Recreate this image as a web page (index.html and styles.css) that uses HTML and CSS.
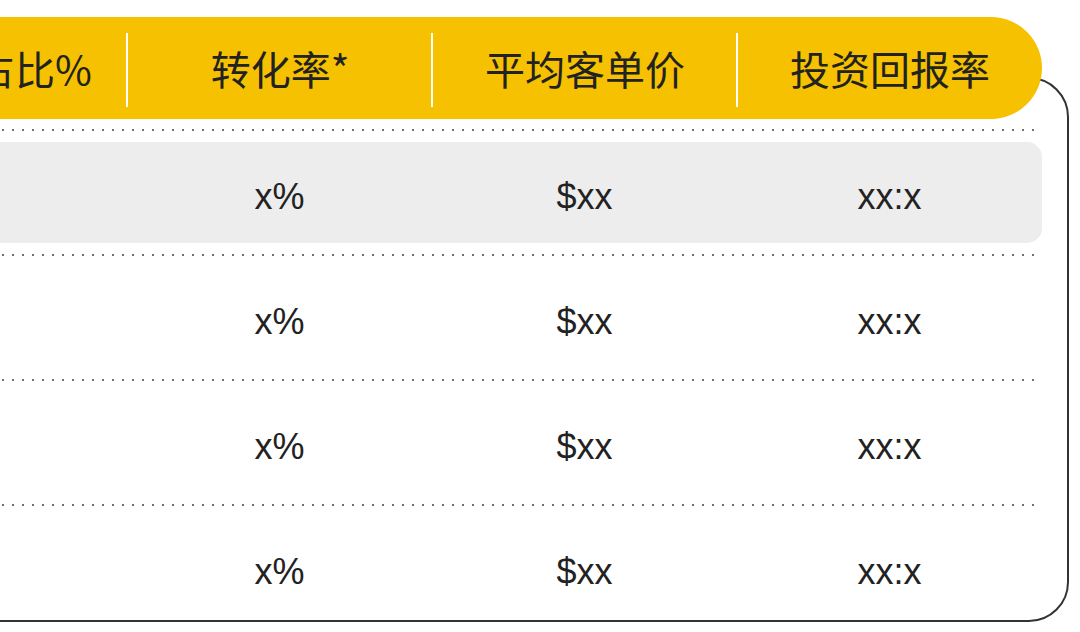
FILE: index.html
```html
<!DOCTYPE html>
<html lang="zh">
<head>
<meta charset="utf-8">
<title>数据表</title>
<link rel="stylesheet" href="styles.css">
</head>
<body>
<div class="card">
  <div class="head">
    <div class="hcell first">销售额占比<span class="pct">%</span></div>
    <div class="hcell divided">转化率*</div>
    <div class="hcell divided">平均客单价</div>
    <div class="hcell divided">投资回报率</div>
  </div>
  <div class="sep"></div>
  <div class="row hl">
    <div class="cell"></div>
    <div class="cell">x%</div>
    <div class="cell">$xx</div>
    <div class="cell">xx:x</div>
  </div>
  <div class="sep"></div>
  <div class="row">
    <div class="cell"></div>
    <div class="cell">x%</div>
    <div class="cell">$xx</div>
    <div class="cell">xx:x</div>
  </div>
  <div class="sep"></div>
  <div class="row">
    <div class="cell"></div>
    <div class="cell">x%</div>
    <div class="cell">$xx</div>
    <div class="cell">xx:x</div>
  </div>
  <div class="sep"></div>
  <div class="row">
    <div class="cell"></div>
    <div class="cell">x%</div>
    <div class="cell">$xx</div>
    <div class="cell">xx:x</div>
  </div>
</div>
</body>
</html>
```
FILE: styles.css
```css
html, body {
  margin: 0;
  padding: 0;
  background: #ffffff;
  overflow: hidden;
}

body {
  width: 1080px;
  height: 632px;
  font-family: "Liberation Sans", "Noto Sans CJK SC", sans-serif;
  color: #222222;
}

.card {
  box-sizing: border-box;
  width: 1269px;
  margin: 77px 0 0 -200px;
  padding: 0 25px 2px 20px;
  border: 2px solid #333333;
  border-radius: 0 40px 40px 0;
}

.head {
  display: grid;
  grid-template-columns: repeat(4, 305px);
  margin-top: -62px;
  padding: 16px 0 12px;
  background: #f5c100;
  border-radius: 0 51px 51px 0;
  font-family: "Noto Sans CJK SC", sans-serif;
  font-size: 40px;
  color: #222222;
}

.hcell {
  height: 74px;
  line-height: 70px;
  text-align: center;
  white-space: nowrap;
}

.hcell.first {
  padding-right: 4px;
}

.pct {
  letter-spacing: -2px;
}

.hcell.divided {
  border-left: 2px solid #ffffff;
  margin-left: -1px;
}

.sep {
  height: 2px;
  margin-top: 10px;
  margin-right: 2px;
  background-image: linear-gradient(to right, #6f6f6f 2px, transparent 2px);
  background-size: 10px 2px;
  background-repeat: repeat-x;
}

.row + .sep {
  margin-top: 11px;
}

.row {
  display: grid;
  grid-template-columns: repeat(4, 305px);
  margin-top: 11px;
  height: 101px;
  border-radius: 15px;
  font-size: 36px;
}

.row.hl {
  background: #ededed;
}

.cell {
  line-height: 101px;
  text-align: center;
  padding-top: 4px;
  box-sizing: border-box;
}
```
